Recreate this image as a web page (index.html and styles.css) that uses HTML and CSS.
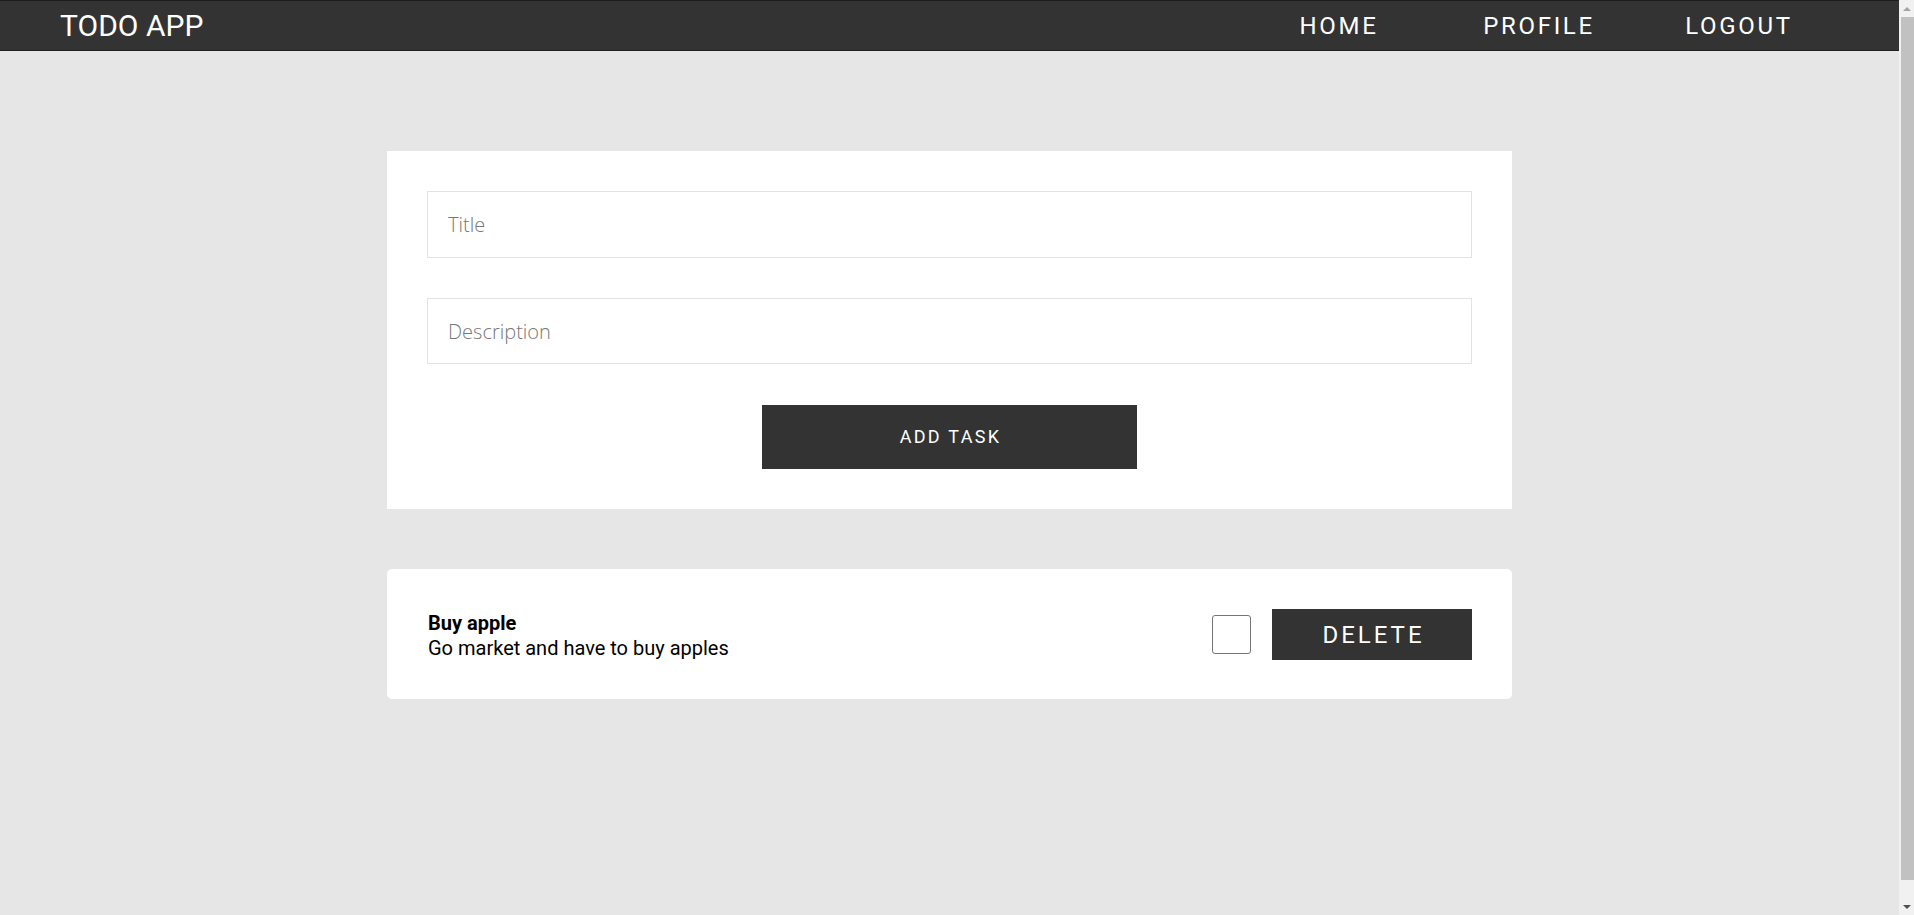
FILE: index.html
```html
<!DOCTYPE html>
<html lang="en">
<head>
<meta charset="utf-8">
<title>Todo App</title>
<link rel="stylesheet" href="styles.css">
</head>
<body>
<header class="navbar">
  <div class="brand">TODO APP</div>
  <nav class="nav-links">
    <a class="nav-link" href="#">HOME</a>
    <a class="nav-link" href="#">PROFILE</a>
    <a class="nav-link" href="#">LOGOUT</a>
  </nav>
</header>
<main class="main">
  <form class="task-form">
    <input class="field" type="text" placeholder="Title">
    <input class="field field-desc" type="text" placeholder="Description">
    <button class="add-btn" type="button">ADD TASK</button>
  </form>
  <div class="task-card">
    <div class="task-text">
      <div class="task-title">Buy apple</div>
      <div class="task-desc">Go market and have to buy apples</div>
    </div>
    <div class="task-actions">
      <input class="task-check" type="checkbox">
      <button class="delete-btn" type="button">DELETE</button>
    </div>
  </div>
</main>
<div class="scrollbar" aria-hidden="true">
  <div class="sb-btn"><span class="sb-arrow-up"></span></div>
  <div class="sb-track"><div class="sb-thumb"></div></div>
  <div class="sb-btn"><span class="sb-arrow-down"></span></div>
</div>
</body>
</html>
```
FILE: styles.css
```css
* { box-sizing: border-box; }

html, body {
  margin: 0;
  padding: 0;
}

body {
  background: #e6e6e6;
  font-family: Roboto, "Liberation Sans", Arial, sans-serif;
  color: #000;
  padding-right: 15px;
  min-height: 100vh;
}

.navbar {
  height: 51px;
  background: #333333;
  border-top: 1px solid #1e1c19;
  border-bottom: 1px solid #1e1e1e;
  display: flex;
  align-items: center;
  justify-content: space-between;
  padding: 0 60px;
}

.brand {
  color: #fff;
  font-size: 30px;
  font-weight: 400;
  line-height: 1;
}

.nav-links {
  display: flex;
}

.nav-link {
  width: 200px;
  text-align: center;
  color: #fff;
  text-decoration: none;
  font-size: 24px;
  letter-spacing: 2.7px;
  line-height: 1;
}

.main {
  padding-top: 100px;
}

.task-form {
  width: 1125px;
  margin: 0 auto;
  background: #fff;
  padding: 40px;
  display: flex;
  flex-direction: column;
  align-items: center;
  gap: 40px;
}

.field {
  width: 100%;
  height: 67px;
  border: 1px solid #e3e3e3;
  background: #fff;
  padding: 0 20px;
  font-family: "Open Sans", Lato, sans-serif;
  font-weight: 300;
  font-size: 20px;
  color: #333;
  outline: none;
}

.field-desc {
  height: 66px;
}

.field::placeholder {
  color: #777;
}

.add-btn {
  width: 375px;
  height: 64px;
  margin-top: 1px;
  border: none;
  background: #333333;
  color: #fff;
  font-family: Roboto, "Liberation Sans", sans-serif;
  font-size: 18px;
  letter-spacing: 2.3px;
  padding: 0 0 2px 2px;
  cursor: pointer;
}

.task-card {
  width: 1125px;
  margin: 60px auto 0;
  background: #fff;
  border-radius: 5px;
  padding: 40px 40px 40px 41px;
  display: flex;
  align-items: center;
  justify-content: space-between;
  height: 130px;
}

.task-text {
  font-size: 20px;
  line-height: 25px;
  padding-top: 3px;
}

.task-title {
  font-weight: 700;
}

.task-actions {
  display: flex;
  align-items: center;
  gap: 21px;
  padding-top: 1px;
}

.task-check {
  appearance: none;
  -webkit-appearance: none;
  margin: 0;
  width: 39px;
  height: 39px;
  border: 1px solid #767676;
  border-radius: 3px;
  background: #fff;
}

.delete-btn {
  width: 200px;
  height: 51px;
  border: none;
  background: #333333;
  color: #fff;
  font-family: Roboto, "Liberation Sans", sans-serif;
  font-size: 24px;
  letter-spacing: 3px;
  padding: 0 0 0 3px;
  cursor: pointer;
}

/* imitation of the browser's classic scrollbar */
.scrollbar {
  position: fixed;
  top: 0;
  right: 0;
  bottom: 0;
  width: 15px;
  background: #f1f1f1;
  display: flex;
  flex-direction: column;
}

.sb-btn {
  height: 17px;
  display: flex;
  align-items: center;
  justify-content: center;
}

.sb-arrow-up {
  width: 0;
  height: 0;
  border-left: 4px solid transparent;
  border-right: 4px solid transparent;
  border-bottom: 4px solid #a3a3a3;
}

.sb-arrow-down {
  width: 0;
  height: 0;
  border-left: 4px solid transparent;
  border-right: 4px solid transparent;
  border-top: 4px solid #505050;
}

.sb-track {
  flex: 1;
  padding: 0 0 18px 2px;
}

.sb-thumb {
  height: 100%;
  background: #c1c1c1;
}
```
